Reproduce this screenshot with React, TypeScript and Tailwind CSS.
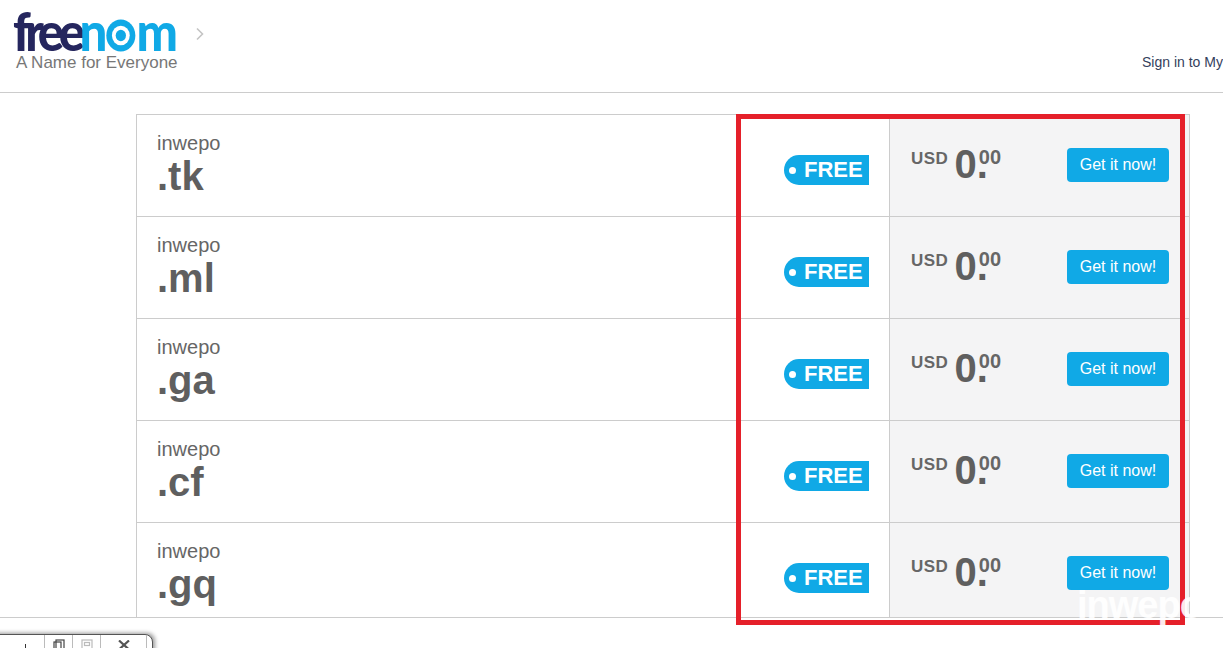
import React from 'react';

const tlds = ['.tk', '.ml', '.ga', '.cf', '.gq'];

const Logo: React.FC = () => (
  <div className="ml-[13px] pt-[10px] w-[170px]">
    <div className="flex items-end h-[42px] w-[180px] origin-left scale-x-[0.91] font-['Lato',sans-serif] font-black text-[54px] leading-[42px] tracking-[-6px]">
      <span className="text-[#25265e]">free</span>
      <span className="text-[#10a9e6]">n</span>
      <svg width="35" height="35" viewBox="0 0 34 34" className="mb-[-1px] ml-[3px] shrink-0">
        <circle cx="17" cy="17" r="15.5" fill="#10a9e6" />
        <circle cx="17" cy="17" r="9.5" fill="#fff" />
        <circle cx="17" cy="17" r="5.5" fill="#10a9e6" />
      </svg>
      <span className="text-[#10a9e6]">m</span>
    </div>
    <div className="ml-[3px] mt-[1px] text-[17px] leading-[20px] text-[#777] whitespace-nowrap">A Name for Everyone</div>
  </div>
);

const Row: React.FC<{ tld: string }> = ({ tld }) => (
  <div className="flex h-[102px] border-b border-[#ccc] text-[#666] shrink-0">
    <div className="flex-1 pl-[20px] pt-[17px]">
      <div className="text-[20px] leading-[23px]">inwepo</div>
      <div className="mt-[-1px] text-[40px] leading-[44px] font-bold text-[#5f5f5f]">{tld}</div>
    </div>
    <div className="flex items-start pt-[40px] pr-[20px]">
      <div className="flex items-center h-[30px] w-[85px] bg-[#10a9e6] rounded-l-full rounded-r-[2px] text-white">
        <span className="ml-[5px] w-[7px] h-[7px] rounded-full bg-white" />
        <span className="ml-[8px] text-[22px] leading-[30px] font-bold">FREE</span>
      </div>
    </div>
    <div className="flex items-start w-[300px] bg-[#f4f4f5] border-l border-[#ccc] pl-[21px] pr-[20px]">
      <span className="mt-[34px] text-[17px] leading-[20px] font-bold tracking-[0.5px]">USD</span>
      <span className="ml-[6px] mt-[26px] text-[40px] leading-[46px] font-bold text-[#5f5f5f]">0.</span>
      <span className="ml-[-9px] mt-[31px] text-[20px] leading-[22px] font-bold">00</span>
      <button className="ml-auto mt-[33px] w-[102px] h-[34px] bg-[#10a9e6] rounded-[4px] text-white text-[16px] leading-[30px] pb-[1px]">
        Get it now!
      </button>
    </div>
  </div>
);

export default function App() {
  return (
    <div className="relative h-[648px] w-full overflow-hidden bg-white font-['Liberation_Sans',Arial,sans-serif]">
      <header className="flex h-[93px] border-b border-[#ccc]">
        <Logo />
        <svg width="10" height="14" viewBox="0 0 10 14" className="ml-[12px] mt-[27px] text-[#c4c4c4]">
          <path d="M2 1.5 L7.5 7 L2 12.5" fill="none" stroke="currentColor" strokeWidth="1.6" />
        </svg>
        <div className="ml-auto mt-[53px] text-[14px] leading-[18px] text-[#34405c] whitespace-nowrap w-[81px] overflow-hidden">
          Sign in to My
        </div>
      </header>

      <main className="h-[525px] border-b border-[#ccc] overflow-hidden pt-[21px] pl-[136px] pr-[33px]">
        <div className="flex flex-col border-l border-r border-t border-[#ccc]">
          {tlds.map((tld) => (
            <Row key={tld} tld={tld} />
          ))}
        </div>
      </main>

      {/* red highlight drawn over the screenshot */}
      <div className="absolute left-[736px] top-[114px] w-[449px] h-[511px] border-[5px] border-[#e5202a]" />

      {/* watermark */}
      <div className="absolute left-[1077px] top-[581px] text-[38px] leading-[48px] font-bold text-white/90 tracking-[-1px]">
        inwepo
      </div>

      {/* window toolbar peeking in at the bottom */}
      <div className="absolute left-[-10px] top-[634px] w-[163px] h-[30px] bg-white border border-[#555] rounded-tr-[8px] shadow-[2px_-1px_4px_rgba(0,0,0,0.4)] flex">
        <div className="w-[54px] border-r border-[#bbb] relative">
          <span className="absolute left-[34px] top-[9px] w-[1px] h-[5px] bg-[#333]" />
        </div>
        <div className="w-[28px] border-r border-[#bbb] flex justify-center pt-[4px]">
          <svg width="12" height="12" viewBox="0 0 12 12" fill="none" stroke="#444" strokeWidth="1.2">
            <rect x="3" y="1" width="8" height="9" />
            <rect x="1" y="3" width="7" height="9" />
          </svg>
        </div>
        <div className="w-[28px] border-r border-[#bbb] flex justify-center pt-[4px]">
          <svg width="12" height="12" viewBox="0 0 12 12" fill="none" stroke="#bbb" strokeWidth="1.2">
            <rect x="1" y="1" width="10" height="10" />
            <rect x="3.5" y="3.5" width="5" height="3" />
          </svg>
        </div>
        <div className="w-[46px] border-r border-[#bbb] flex justify-center pt-[5px]">
          <svg width="12" height="10" viewBox="0 0 12 10" fill="none" stroke="#555" strokeWidth="2.2">
            <path d="M1 0.5 L11 9.5 M11 0.5 L1 9.5" />
          </svg>
        </div>
      </div>
    </div>
  );
}
